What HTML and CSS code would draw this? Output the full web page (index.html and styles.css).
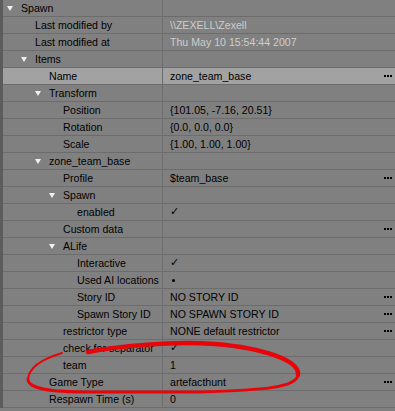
FILE: index.html
```html
<!DOCTYPE html>
<html lang="en">
<head>
  <meta charset="UTF-8" />
  <title>Spawn Properties</title>
  <link rel="stylesheet" href="styles.css">
</head>
<body>
  <div class="props">
    <div class="row l0"><div class="key"><span class="tri"></span>Spawn</div><div class="val"></div></div>
    <div class="row l1"><div class="key"><span class="tri none"></span>Last modified by</div><div class="val dim">\\ZEXELL\Zexell</div></div>
    <div class="row l1"><div class="key"><span class="tri none"></span>Last modified at</div><div class="val dim">Thu May 10 15:54:44 2007</div></div>
    <div class="row l1"><div class="key"><span class="tri"></span>Items</div><div class="val"></div></div>
    <div class="row l2 selected"><div class="key"><span class="tri none"></span>Name</div><div class="val">zone_team_base<span class="more"><i></i><i></i><i></i></span></div></div>
    <div class="row l2"><div class="key"><span class="tri"></span>Transform</div><div class="val"></div></div>
    <div class="row l3"><div class="key"><span class="tri none"></span>Position</div><div class="val">{101.05, -7.16, 20.51}</div></div>
    <div class="row l3"><div class="key"><span class="tri none"></span>Rotation</div><div class="val">{0.0, 0.0, 0.0}</div></div>
    <div class="row l3"><div class="key"><span class="tri none"></span>Scale</div><div class="val">{1.00, 1.00, 1.00}</div></div>
    <div class="row l2"><div class="key"><span class="tri"></span>zone_team_base</div><div class="val"></div></div>
    <div class="row l3"><div class="key"><span class="tri none"></span>Profile</div><div class="val">$team_base<span class="more"><i></i><i></i><i></i></span></div></div>
    <div class="row l3"><div class="key"><span class="tri"></span>Spawn</div><div class="val"></div></div>
    <div class="row l4"><div class="key"><span class="tri none"></span>enabled</div><div class="val"><span class="check">&#10003;</span></div></div>
    <div class="row l3"><div class="key"><span class="tri none"></span>Custom data</div><div class="val"><span class="more"><i></i><i></i><i></i></span></div></div>
    <div class="row l3"><div class="key"><span class="tri"></span>ALife</div><div class="val"></div></div>
    <div class="row l4"><div class="key"><span class="tri none"></span>Interactive</div><div class="val"><span class="check">&#10003;</span></div></div>
    <div class="row l4"><div class="key"><span class="tri none"></span>Used AI locations</div><div class="val"><span class="dot"></span></div></div>
    <div class="row l4"><div class="key"><span class="tri none"></span>Story ID</div><div class="val">NO STORY ID<span class="more"><i></i><i></i><i></i></span></div></div>
    <div class="row l4"><div class="key"><span class="tri none"></span>Spawn Story ID</div><div class="val">NO SPAWN STORY ID<span class="more"><i></i><i></i><i></i></span></div></div>
    <div class="row l3"><div class="key"><span class="tri none"></span>restrictor type</div><div class="val">NONE default restrictor<span class="more"><i></i><i></i><i></i></span></div></div>
    <div class="row l3"><div class="key"><span class="tri none"></span>check for separator</div><div class="val"><span class="check">&#10003;</span></div></div>
    <div class="row l3"><div class="key"><span class="tri none"></span>team</div><div class="val">1</div></div>
    <div class="row l2"><div class="key"><span class="tri none"></span>Game Type</div><div class="val">artefacthunt<span class="more"><i></i><i></i><i></i></span></div></div>
    <div class="row l2"><div class="key"><span class="tri none"></span>Respawn Time (s)</div><div class="val">0</div></div>
  </div>

  <!-- hand-drawn marker around team / Game Type -->
  <svg class="marker" width="395" height="411" viewBox="0 0 395 411">
    <path d="M88 352 C 120 346, 170 341, 215 344 C 262 348, 300 360, 298 375" stroke-width="4.5" />
    <path d="M298 375 C 296 388, 262 390, 200 392 L 90 392 C 50 392, 28 389, 28 379" stroke-width="3" />
    <path d="M28 379 C 29 368, 42 359, 62 353" stroke-width="2" />
  </svg>
</body>
</html>
```

FILE: styles.css
```css
body {
  margin: 0;
  background: #808080;
  font-family: "Liberation Sans", Arial, sans-serif;
  font-size: 10.6px;
  color: #000;
  width: 395px;
  height: 411px;
  overflow: hidden;
  position: relative;
}

.props {
  border-left: 3px solid #5c5c5c;
}

.row {
  display: grid;
  grid-template-columns: 160px 1fr;
  height: 16px;
  line-height: 16px;
  border-bottom: 1px solid #6c6c6c;
}

.row.selected {
  background: #a2a2a2;
}

.key {
  display: flex;
  align-items: center;
  white-space: nowrap;
  overflow: hidden;
  border-right: 1px solid #6c6c6c;
}

.l0 .key { padding-left: 4px; }
.l1 .key { padding-left: 18px; }
.l2 .key { padding-left: 32px; }
.l3 .key { padding-left: 46px; }
.l4 .key { padding-left: 60px; }

.tri {
  width: 14px;
  height: 16px;
  flex: none;
  position: relative;
}

.tri::before {
  content: "";
  position: absolute;
  left: 0;
  top: 6px;
  border-left: 3px solid transparent;
  border-right: 3px solid transparent;
  border-top: 5px solid #f0f0f0;
}

.tri.none::before {
  display: none;
}

.val {
  display: flex;
  align-items: center;
  padding-left: 7px;
  padding-right: 3px;
  white-space: nowrap;
}

.val.dim {
  color: #cdcdcd;
}

.more {
  margin-left: auto;
  display: flex;
  gap: 1px;
}

.more i {
  width: 2px;
  height: 2px;
  background: #000;
}

.check {
  font-family: "DejaVu Sans", sans-serif;
  font-size: 11px;
  font-weight: bold;
}

.dot {
  width: 3px;
  height: 3px;
  border-radius: 50%;
  background: #000;
  margin-left: 2px;
}

.marker {
  position: absolute;
  left: 0;
  top: 0;
  pointer-events: none;
}

.marker path {
  fill: none;
  stroke: #e8050a;
  stroke-linecap: round;
}
```
